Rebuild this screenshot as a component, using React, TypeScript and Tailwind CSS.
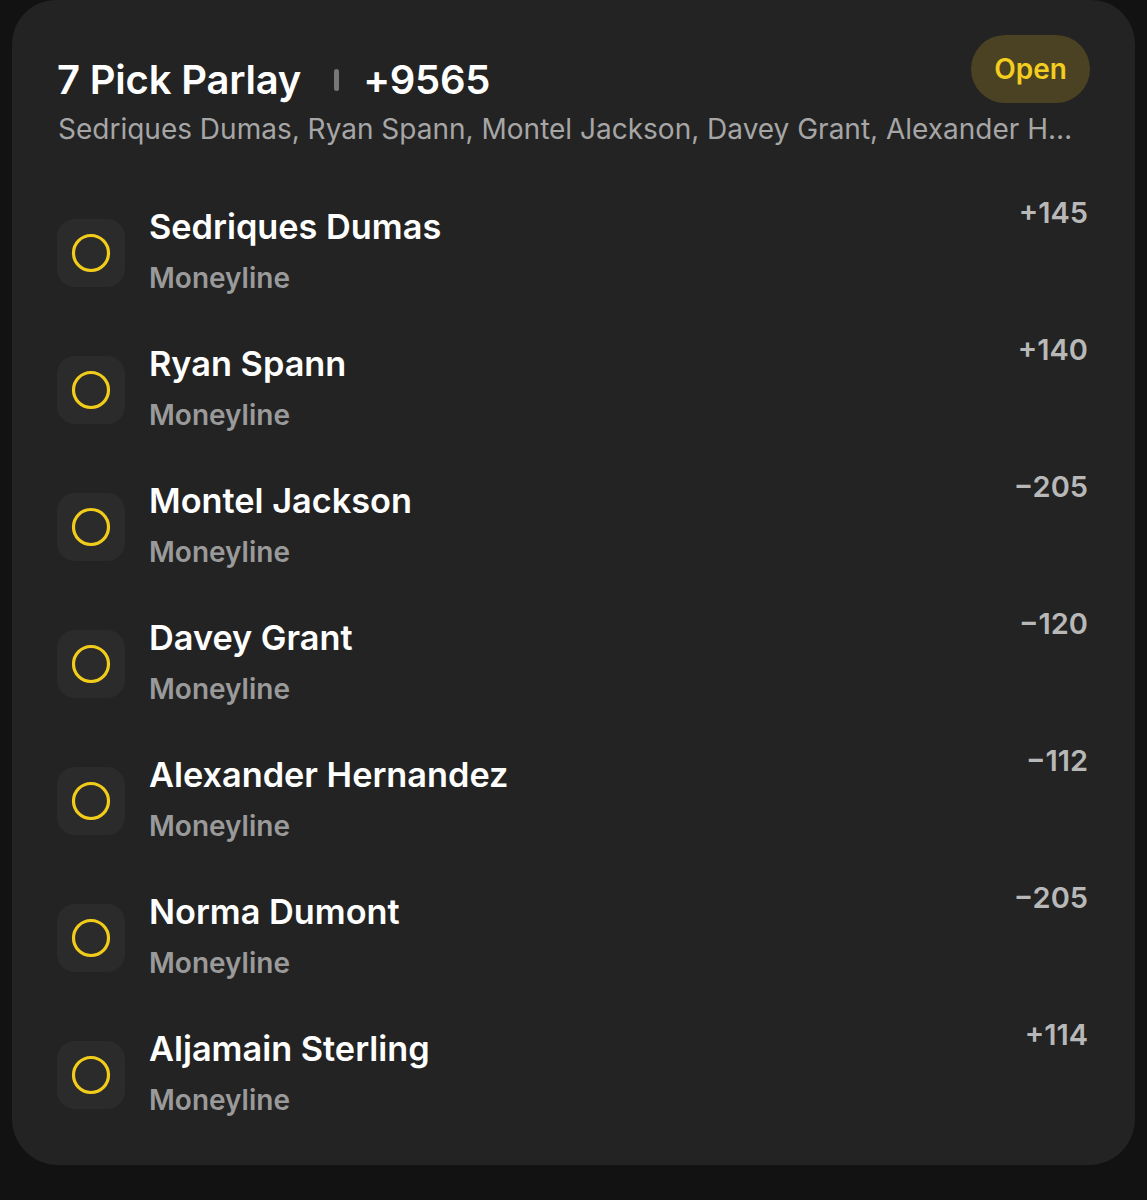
import React from "react";

const picks = [
    { name: "Sedriques Dumas", odds: "+145" },
    { name: "Ryan Spann", odds: "+140" },
    { name: "Montel Jackson", odds: "−205" },
    { name: "Davey Grant", odds: "−120" },
    { name: "Alexander Hernandez", odds: "−112" },
    { name: "Norma Dumont", odds: "−205" },
    { name: "Aljamain Sterling", odds: "+114" },
];

const PickIcon = () => (
    <div className="w-[68px] h-[68px] shrink-0 mt-[24px] rounded-[18px] bg-[#2b2b2b] flex items-center justify-center">
        <svg width="40" height="40" viewBox="0 0 40 40">
            <circle cx="20" cy="20" r="17.5" fill="none" stroke="#f2cc1b" strokeWidth="3.2" />
        </svg>
    </div>
);

const App = () => {
    return (
        <div className="bg-[#121212] h-[1200px] w-[1147px] overflow-hidden font-['Inter',sans-serif]">
            <div className="ml-[12px] w-[1123px] h-[1165px] bg-[#232323] rounded-b-[46px] rounded-t-[44px] pt-[35px] pl-[45px] pr-[45px]">
                <div className="flex justify-between items-start">
                    <div className="mt-[20px] flex items-center h-[50px]">
                        <span className="text-[40px] leading-[50px] font-semibold text-white tracking-[-0.2px]">7 Pick Parlay</span>
                        <span className="ml-[33px] mr-[24px] w-[5px] h-[22px] rounded-full bg-[#777777]"></span>
                        <span className="text-[40px] leading-[50px] font-semibold text-white tracking-[-0.3px]">+9565</span>
                    </div>
                    <div className="h-[68px] px-[23px] rounded-full bg-[#4a4222] flex items-center">
                        <span className="text-[28px] font-semibold text-[#f3cd1f]">Open</span>
                    </div>
                </div>
                <div className="mt-[6px] pl-[1px] pr-[4px] text-[28px] leading-[36px] text-[#a6a6a6] truncate">
                    {picks.map((p) => p.name).join(", ")}
                </div>
                <div className="mt-[48px] flex flex-col">
                    {picks.map((pick, index) => (
                        <div className="h-[137px] flex items-start" key={index}>
                            <PickIcon />
                            <div className="ml-[24px] pt-[10px] flex-1">
                                <div className="text-[34.3px] leading-[44px] font-semibold text-white">{pick.name}</div>
                                <div className="mt-[11px] text-[28px] leading-[36px] font-semibold text-[#9a9a9a]">Moneyline</div>
                            </div>
                            <div className="text-[29px] leading-[36px] font-semibold text-[#b8b8b8] pr-[2px]">{pick.odds}</div>
                        </div>
                    ))}
                </div>
            </div>
        </div>
    );
};

export default App;
